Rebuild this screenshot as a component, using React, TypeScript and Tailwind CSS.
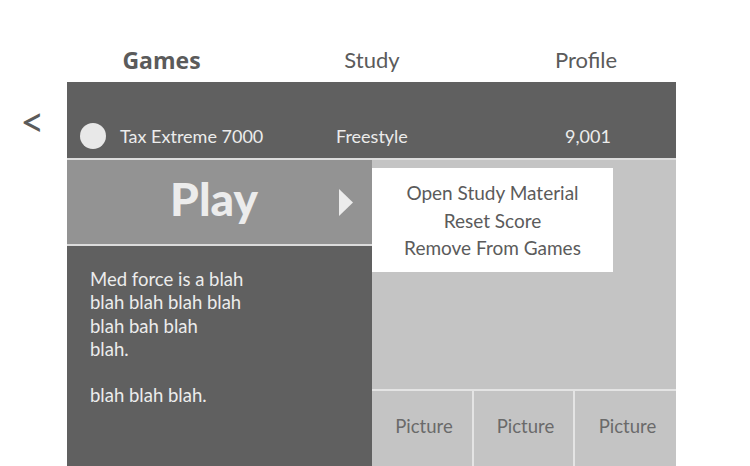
import React from "react";

const pictures = ["Picture", "Picture", "Picture"];

export default function App() {
  return (
    <div className="w-[750px] h-[466px] bg-white overflow-hidden font-['Lato',sans-serif] text-[#5b5b5b]">
      {/* Top nav */}
      <nav className="h-[82px] flex items-end pb-[8px] text-[22px] leading-[28px]">
        <div className="ml-[61px] w-[200px] text-center font-bold font-['Open_Sans',sans-serif] text-[23px] pl-[1px]">Games</div>
        <div className="ml-[11px] w-[200px] text-center">Study</div>
        <div className="ml-[14px] w-[200px] text-center">Profile</div>
      </nav>

      <div className="flex">
        {/* Back */}
        <div className="w-[67px] flex justify-center">
          <span className="mt-[15px] mr-[2px] text-[42px] leading-[48px] text-[#5b5b5b]">&lt;</span>
        </div>

        <div className="w-[609px] flex flex-col">
          {/* Game row */}
          <div className="h-[76px] bg-[#606060] flex items-end pb-[8px] text-[18px] leading-[28px] text-[#ececec]">
            <div className="ml-[13px] w-[26px] h-[26px] rounded-full bg-[#e8e8e8] mb-[1px]" />
            <span className="ml-[14px] w-[216px]">Tax Extreme 7000</span>
            <span className="w-[229px]">Freestyle</span>
            <span>9,001</span>
          </div>
          <div className="h-[2px] bg-[#dcdcdc]" />

          <div className="flex h-[306px]">
            {/* Left column */}
            <div className="w-[305px] flex flex-col">
              <div className="h-[84px] bg-[#939393] flex items-center">
                <div className="flex-1 text-center pl-[22px] pb-[6px] text-[46px] font-black leading-[52px] text-[#ececec]">
                  Play
                </div>
                <svg width="14" height="27" viewBox="0 0 14 27" className="mr-[19px]">
                  <polygon points="0,0 14,13.5 0,27" fill="#ececec" />
                </svg>
              </div>
              <div className="h-[2px] bg-[#dcdcdc]" />
              <div className="flex-1 bg-[#606060] pl-[23px] pt-[22px] text-[18.5px] leading-[23.3px] text-[#ececec]">
                <p>Med force is a blah</p>
                <p>blah blah blah blah</p>
                <p>blah bah blah</p>
                <p>blah.</p>
                <p className="mt-[23.3px]">blah blah blah.</p>
              </div>
            </div>

            {/* Right column */}
            <div className="relative w-[304px] flex flex-col bg-[#c4c4c4]">
              <div className="h-[229px]" />
              <div className="h-[2px] bg-[#e4e4e4]" />
              <div className="flex-1 grid grid-cols-[100px_99px_101px] gap-x-[2px] bg-[#e4e4e4]">
                {pictures.map((p, i) => (
                  <div key={i} className="bg-[#c4c4c4] flex items-center justify-center pb-[3px] pl-[4px] text-[18.5px] text-[#6a6a6a]">
                    {p}
                  </div>
                ))}
              </div>

              {/* Context menu */}
              <div className="absolute left-0 top-[8px] w-[241px] h-[104px] bg-white flex flex-col items-center pt-[11px] text-[19px] leading-[27.5px] text-[#5b5b5b]">
                <span>Open Study Material</span>
                <span>Reset Score</span>
                <span>Remove From Games</span>
              </div>
            </div>
          </div>
        </div>
      </div>
    </div>
  );
}
